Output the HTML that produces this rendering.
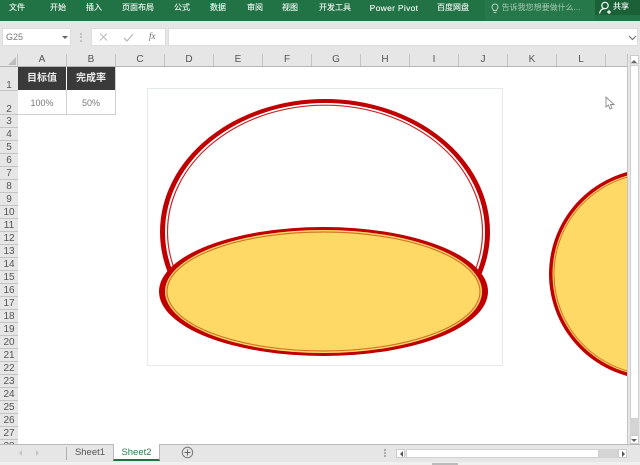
<!DOCTYPE html>
<html lang="zh"><head><meta charset="utf-8">
<style>
*{box-sizing:border-box;margin:0;padding:0}
html,body{width:640px;height:465px;overflow:hidden;background:#e6e6e6}
body{position:relative;font-family:"Liberation Sans","Noto Sans CJK SC",sans-serif;filter:blur(.3px)}
.a{position:absolute}
.t{position:absolute;white-space:nowrap;line-height:1;text-align:center}
.r{position:absolute;top:2px;height:19px;line-height:12px;font-size:8px;color:#f2f7f4;white-space:nowrap;transform:translateX(-50%);-webkit-text-stroke:.12px #f2f7f4}
.ch{position:absolute;top:54px;height:12px;font-size:10px;line-height:12px;text-align:center;color:#555;border-right:1px solid #c4c4c4}
.rh{position:absolute;left:0;width:18px;font-size:10px;text-align:center;color:#555;border-bottom:1px solid #c4c4c4;background:#e6e6e6;line-height:13px}
</style></head><body>
<!-- ribbon -->
<div class="a" style="left:0;top:0;width:640px;height:21px;background:#217346"></div>
<div class="a" style="left:485px;top:0;width:110px;height:21px;background:#26784b"></div>
<div class="a" style="left:595px;top:0;width:45px;height:15px;background:#1b6138"></div>
<span class="r" style="left:17px">文件</span>
<span class="r" style="left:58px">开始</span>
<span class="r" style="left:94px">插入</span>
<span class="r" style="left:138px">页面布局</span>
<span class="r" style="left:182px">公式</span>
<span class="r" style="left:218px">数据</span>
<span class="r" style="left:255px">审阅</span>
<span class="r" style="left:290px">视图</span>
<span class="r" style="left:335px">开发工具</span>
<span class="r" style="left:394px;letter-spacing:.3px;font-size:8.5px">Power Pivot</span>
<span class="r" style="left:453px">百度网盘</span>
<svg class="a" style="left:488px;top:2px" width="14" height="12" viewBox="0 0 14 12"><path d="M4 5a3 3 0 1 1 6 0c0 1.500-1.200 2-1.500 3.500h-3C5.200 7 4 6.500 4 5zM5.700 10.500h2.600" fill="none" stroke="#b9d3c4" stroke-width="1"/></svg>
<span class="r" style="left:541px;color:#a9c8b6;-webkit-text-stroke:0">告诉我您想要做什么...</span>
<svg class="a" style="left:598px;top:1px" width="14" height="14" viewBox="0 0 14 14"><circle cx="7" cy="4.500" r="3.200" fill="none" stroke="#fff" stroke-width="1.200"/><path d="M1.500 12.500c.5-3 2.500-5 5.500-5M9 11h4M11 9v4" fill="none" stroke="#fff" stroke-width="1.200"/></svg>
<span class="r" style="left:621px;top:1px;color:#fff">共享</span>
<!-- formula bar -->
<div class="a" style="left:2px;top:28px;width:69px;height:18px;background:#fff;border:1px solid #ddd"></div>
<span class="t" style="left:6px;top:33px;font-size:9px;color:#777">G25</span>
<div class="a" style="left:62px;top:36px;border:3px solid transparent;border-top:3px solid #666"></div>
<div class="a" style="left:80px;top:33px;width:2px;height:9px;border-left:2px dotted #c2c2c2"></div>
<div class="a" style="left:91px;top:28px;width:75px;height:18px;background:#fff;border:1px solid #ddd"></div>
<svg class="a" style="left:98px;top:31px" width="64" height="13" viewBox="0 0 64 13"><path d="M2 2.500l7 7M9 2.500l-7 7" stroke="#bbb" stroke-width="1.100" fill="none"/><path d="M26 7l3 3 6-7" stroke="#bbb" stroke-width="1.300" fill="none"/></svg>
<span class="t" style="left:149px;top:32px;font-size:9px;font-style:italic;font-family:'Liberation Serif',serif;color:#666">fx</span>
<div class="a" style="left:168px;top:28px;width:470px;height:18px;background:#fff;border:1px solid #ddd"></div>
<svg class="a" style="left:628px;top:35px" width="9" height="6" viewBox="0 0 9 6"><path d="M1 1l3.500 3.500L8 1" stroke="#777" fill="none" stroke-width="1.200"/></svg>
<!-- column headers -->
<div class="a" style="left:0;top:54px;width:627px;height:13px;background:#e6e6e6;border-bottom:1px solid #b5b5b5"></div>
<svg class="a" style="left:7px;top:56px" width="10" height="10" viewBox="0 0 10 10"><path d="M9 1v8H1z" fill="#bdbdbd"/></svg>
<div class="a" style="left:17px;top:54px;width:1px;height:12px;background:#c4c4c4"></div>
<div class="ch" style="left:18px;width:49px">A</div>
<div class="ch" style="left:67px;width:49px">B</div>
<div class="ch" style="left:116px;width:49px">C</div>
<div class="ch" style="left:165px;width:49px">D</div>
<div class="ch" style="left:214px;width:49px">E</div>
<div class="ch" style="left:263px;width:49px">F</div>
<div class="ch" style="left:312px;width:49px">G</div>
<div class="ch" style="left:361px;width:49px">H</div>
<div class="ch" style="left:410px;width:49px">I</div>
<div class="ch" style="left:459px;width:49px">J</div>
<div class="ch" style="left:508px;width:49px">K</div>
<div class="ch" style="left:557px;width:49px">L</div>
<!-- sheet -->
<div class="a" style="left:18px;top:67px;width:609px;height:377px;background:#fff"></div>
<div class="a" style="left:17px;top:67px;width:1px;height:377px;background:#b5b5b5"></div>
<!-- row headers -->
<div class="rh" style="top:67px;height:24px;padding-top:12px">1</div>
<div class="rh" style="top:91px;height:24px;padding-top:12px">2</div>
<div class="rh" style="top:115px;height:13px">3</div>
<div class="rh" style="top:128px;height:13px">4</div>
<div class="rh" style="top:141px;height:13px">5</div>
<div class="rh" style="top:154px;height:13px">6</div>
<div class="rh" style="top:167px;height:13px">7</div>
<div class="rh" style="top:180px;height:13px">8</div>
<div class="rh" style="top:193px;height:13px">9</div>
<div class="rh" style="top:206px;height:13px">10</div>
<div class="rh" style="top:219px;height:13px">11</div>
<div class="rh" style="top:232px;height:13px">12</div>
<div class="rh" style="top:245px;height:13px">13</div>
<div class="rh" style="top:258px;height:13px">14</div>
<div class="rh" style="top:271px;height:13px">15</div>
<div class="rh" style="top:284px;height:13px">16</div>
<div class="rh" style="top:297px;height:13px">17</div>
<div class="rh" style="top:310px;height:13px">18</div>
<div class="rh" style="top:323px;height:13px">19</div>
<div class="rh" style="top:336px;height:13px">20</div>
<div class="rh" style="top:349px;height:13px">21</div>
<div class="rh" style="top:362px;height:13px">22</div>
<div class="rh" style="top:375px;height:13px">23</div>
<div class="rh" style="top:388px;height:13px">24</div>
<div class="rh" style="top:401px;height:13px">25</div>
<div class="rh" style="top:414px;height:13px">26</div>
<div class="rh" style="top:427px;height:13px">27</div>
<div class="rh" style="top:440px;height:4px;overflow:hidden;border:0">28</div>
<!-- table -->
<div class="a" style="left:18px;top:67px;width:48px;height:23px;background:#3a3a3a"></div>
<div class="a" style="left:67px;top:67px;width:48px;height:23px;background:#3a3a3a"></div>
<span class="t" style="left:18px;top:74px;width:48px;font-size:10px;color:#eee;font-weight:bold">目标值</span>
<span class="t" style="left:67px;top:74px;width:48px;font-size:10px;color:#eee;font-weight:bold">完成率</span>
<div class="a" style="left:66px;top:90px;width:1px;height:24px;background:#d0d0d0"></div>
<div class="a" style="left:115px;top:67px;width:1px;height:48px;background:#d0d0d0"></div>
<div class="a" style="left:18px;top:114px;width:98px;height:1px;background:#d0d0d0"></div>
<span class="t" style="left:18px;top:99px;width:48px;font-size:9px;color:#777">100%</span>
<span class="t" style="left:67px;top:99px;width:48px;font-size:9px;color:#777">50%</span>
<!-- chart -->
<div class="a" style="left:147px;top:88px;width:356px;height:278px;background:#fff;border:1px solid #e2ece5"></div>
<svg class="a" style="left:0;top:0" width="627" height="444" viewBox="0 0 627 444">
<clipPath id="d"><rect x="140" y="90" width="370" height="195"/></clipPath>
<g clip-path="url(#d)">
<ellipse cx="325" cy="232" rx="165" ry="133" fill="#c00000"/>
<ellipse cx="325" cy="232" rx="160" ry="129" fill="#fff"/>
<ellipse cx="325" cy="232" rx="157.500" ry="126.800" fill="none" stroke="#c8282a" stroke-width="1.200"/>
</g>
<ellipse cx="323.500" cy="291.500" rx="164.500" ry="64.500" fill="#c00000"/>
<ellipse cx="323.500" cy="291.500" rx="158.500" ry="61.500" fill="#ffd966"/>
<ellipse cx="323.500" cy="291.500" rx="156.500" ry="59.500" fill="none" stroke="#d0742a" stroke-width="1.200"/>
<ellipse cx="656" cy="274" rx="107" ry="106" fill="#c00000"/>
<ellipse cx="656" cy="274" rx="103.500" ry="102.500" fill="#ffd966"/>
<ellipse cx="656" cy="274" rx="102" ry="101" fill="none" stroke="#d8702a" stroke-width="1"/>
</svg>
<!-- cursor -->
<svg class="a" style="left:605px;top:96px" width="11" height="15" viewBox="0 0 11 15"><path d="M1 1v10l2.500-2 1.500 4 2-1-1.500-3.500H9z" fill="#fff" stroke="#888" stroke-width=".9"/></svg>
<!-- right scrollbar -->
<div class="a" style="left:627px;top:54px;width:13px;height:391px;background:#e6e6e6;border-left:1px solid #c4c4c4"></div>
<div class="a" style="left:630px;top:55px;width:9px;height:9px;background:#fff;border:1px solid #ccc"></div>
<div class="a" style="left:631px;top:57px;border:3px solid transparent;border-bottom:3px solid #666"></div>
<div class="a" style="left:630px;top:65px;width:9px;height:370px;background:#d4d4d4"></div>
<div class="a" style="left:630px;top:65px;width:9px;height:354px;background:#fff;border:1px solid #d0d0d0"></div>
<div class="a" style="left:630px;top:435px;width:9px;height:9px;background:#fff;border:1px solid #ccc"></div>
<div class="a" style="left:631px;top:439px;border:3px solid transparent;border-top:3px solid #666"></div>
<!-- bottom bar -->
<div class="a" style="left:0;top:444px;width:640px;height:18px;background:#e6e6e6;border-top:1px solid #b8b8b8"></div>
<div class="a" style="left:0;top:462px;width:640px;height:3px;background:#f0f0ee"></div>
<div class="a" style="left:432px;top:463px;width:26px;height:2px;background:#bbb"></div>
<div class="a" style="left:16px;top:450px;border:3px solid transparent;border-right:3px solid #c4c4c4"></div>
<div class="a" style="left:36px;top:450px;border:3px solid transparent;border-left:3px solid #c4c4c4"></div>
<div class="a" style="left:66px;top:447px;width:1px;height:13px;background:#b0b0b0"></div>
<span class="t" style="left:67px;top:448px;width:46px;font-size:9.500px;color:#555">Sheet1</span>
<div class="a" style="left:113px;top:444px;width:47px;height:17px;background:#fff;border:1px solid #b8b8b8;border-top:0;border-bottom:2px solid #217346"></div>
<span class="t" style="left:113px;top:448px;width:47px;font-size:9.500px;color:#2f7a4f">Sheet2</span>
<svg class="a" style="left:181px;top:446px" width="13" height="13" viewBox="0 0 13 13"><circle cx="6.500" cy="6.500" r="5.200" fill="none" stroke="#777"/><path d="M3.500 6.500h6M6.500 3.500v6" stroke="#666"/></svg>
<div class="a" style="left:384px;top:449px;width:2px;height:8px;border-left:2px dotted #aaa"></div>
<div class="a" style="left:396px;top:449px;width:9px;height:9px;background:#fff;border:1px solid #ccc"></div>
<div class="a" style="left:397px;top:451px;border:3px solid transparent;border-right:3px solid #555"></div>
<div class="a" style="left:406px;top:449px;width:193px;height:9px;background:#fff;border:1px solid #d0d0d0"></div>
<div class="a" style="left:599px;top:449px;width:19px;height:9px;background:#d4d4d4"></div>
<div class="a" style="left:618px;top:449px;width:9px;height:9px;background:#fff;border:1px solid #ccc"></div>
<div class="a" style="left:622px;top:451px;border:3px solid transparent;border-left:3px solid #555"></div>
</body></html>
